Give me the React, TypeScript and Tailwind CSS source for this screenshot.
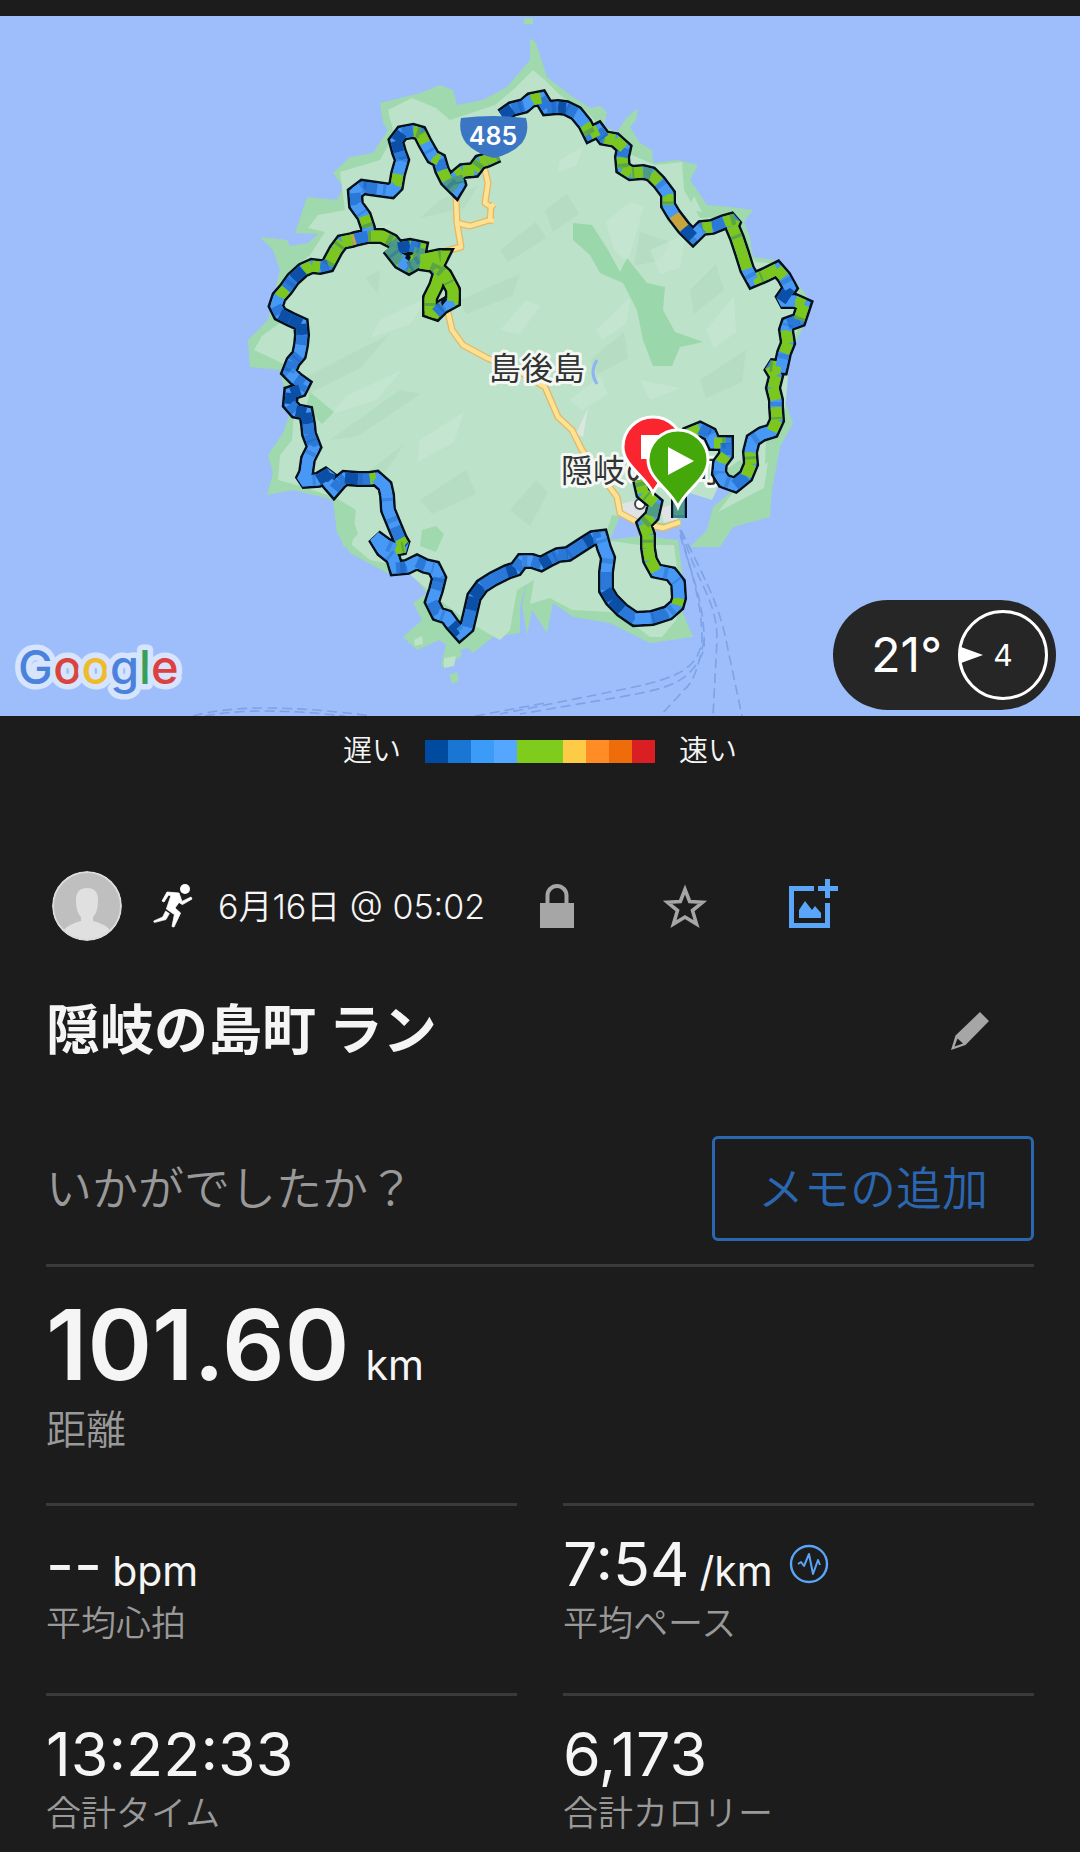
import React from "react";

const speedColors = [
  "bg-[#004a9f]",
  "bg-[#1976d2]",
  "bg-[#3a9bf8]",
  "bg-[#55a6ff]",
  "bg-[#80cc1c]",
  "bg-[#80cc1c]",
  "bg-[#fecb47]",
  "bg-[#ff8c24]",
  "bg-[#ee6c0a]",
  "bg-[#d91f22]",
];

const stats = [
  { value: "--", unit: "bpm", label: "平均心拍" },
  { value: "7:54", unit: "/km", label: "平均ペース", graded: true },
  { value: "13:22:33", label: "合計タイム" },
  { value: "6,173", label: "合計カロリー" },
];

const paceColor: Record<string, string> = {
  d: "#0b4fa6",
  b: "#2a78d8",
  l: "#4799f5",
  g: "#7bc71f",
  t: "#4d9a86",
  o: "#c9a43a",
};

// x, y, pace of the stretch that ends at this point
type Point = [number, number, string];

const tracks: Point[][] = [
  [
    [498, 155, "g"], [487, 160, "g"], [480, 162, "g"], [474, 170, "g"], [463, 171, "g"], [457, 176, "g"],
    [459, 184, "t"], [456, 189, "l"], [447, 180, "t"], [442, 170, "g"], [439, 160, "b"], [433, 157, "g"],
    [425, 143, "l"], [420, 133, "g"], [413, 131, "g"], [402, 133, "b"], [396, 141, "d"], [399, 152, "d"],
    [402, 160, "b"], [398, 174, "l"], [396, 186, "g"], [391, 191, "l"], [377, 189, "l"], [363, 187, "b"],
    [355, 193, "l"], [356, 205, "b"], [364, 216, "l"], [368, 228, "g"], [368, 236, "l"], [355, 239, "b"],
    [352, 240, "o"], [342, 242, "g"], [336, 250, "g"], [328, 265, "g"], [320, 267, "b"], [312, 266, "g"],
    [303, 270, "g"], [293, 279, "d"], [286, 289, "b"], [279, 297, "g"], [276, 306, "l"], [280, 314, "b"],
    [290, 319, "d"], [301, 324, "d"], [302, 335, "d"], [301, 345, "b"], [299, 355, "l"], [293, 362, "b"],
    [289, 372, "b"], [296, 379, "l"], [303, 384, "b"], [300, 390, "b"], [291, 393, "d"], [290, 404, "d"],
    [296, 411, "b"], [306, 413, "d"], [308, 424, "d"], [309, 434, "b"], [314, 447, "b"], [308, 459, "l"],
    [306, 473, "l"], [302, 481, "l"], [318, 480, "l"], [330, 473, "d"], [328, 482, "d"], [334, 489, "l"],
    [340, 482, "b"], [345, 478, "b"], [358, 479, "d"], [370, 479, "b"], [376, 478, "g"], [385, 486, "l"],
    [387, 495, "l"], [388, 510, "l"], [395, 527, "l"], [400, 539, "b"], [404, 546, "g"], [405, 547, "d"],
    [395, 549, "g"], [386, 545, "l"], [375, 537, "l"], [383, 550, "l"], [393, 558, "l"], [396, 568, "l"],
    [407, 567, "b"], [417, 562, "l"], [425, 566, "b"], [434, 568, "l"], [439, 578, "l"], [436, 590, "b"],
    [432, 602, "l"], [438, 614, "b"], [447, 617, "l"], [452, 624, "l"], [460, 633, "d"], [467, 627, "l"],
    [471, 610, "b"], [474, 597, "d"], [482, 586, "d"], [493, 579, "b"], [507, 572, "b"], [516, 569, "d"],
    [522, 561, "b"], [532, 561, "l"], [541, 564, "b"], [550, 559, "d"], [558, 555, "b"], [568, 554, "b"],
    [585, 543, "b"], [593, 538, "d"], [601, 537, "b"], [604, 548, "l"], [608, 558, "l"], [606, 572, "l"],
    [606, 590, "b"], [612, 600, "d"], [622, 610, "d"], [635, 619, "b"], [652, 618, "l"], [668, 613, "b"],
    [677, 605, "l"], [679, 598, "g"], [678, 583, "l"], [671, 574, "l"], [656, 571, "l"], [650, 560, "g"],
    [648, 548, "g"], [648, 535, "g"], [644, 524, "g"], [652, 516, "g"], [655, 503, "t"], [643, 493, "g"],
    [640, 480, "g"],
  ],
  [
    [368, 236, "g"], [382, 236, "g"], [392, 241, "g"], [398, 248, "t"], [410, 246, "d"], [420, 248, "b"],
    [418, 258, "t"], [408, 263, "g"], [398, 258, "l"], [389, 248, "b"], [400, 262, "t"], [409, 267, "l"],
    [421, 260, "t"], [440, 256, "g"], [442, 256, "g"], [436, 268, "g"], [440, 273, "b"], [436, 286, "g"],
    [430, 298, "g"], [430, 311, "g"], [436, 313, "g"], [442, 307, "b"], [453, 301, "l"], [453, 290, "g"],
    [445, 275, "g"], [434, 265, "g"], [420, 263, "g"],
  ],
  [
    [679, 518, "t"], [679, 490, "t"], [678, 450, "g"], [688, 434, "g"], [700, 429, "g"], [710, 434, "b"],
    [714, 443, "l"], [726, 443, "g"], [726, 455, "b"], [720, 463, "g"], [719, 473, "l"], [724, 481, "l"],
    [735, 485, "l"], [746, 476, "b"], [751, 464, "g"], [750, 452, "g"], [753, 440, "l"], [762, 434, "l"],
    [772, 431, "l"], [777, 420, "g"], [776, 407, "g"], [776, 400, "l"], [773, 388, "g"], [776, 376, "g"],
    [770, 366, "g"], [781, 367, "g"], [784, 353, "l"], [788, 343, "g"], [786, 330, "g"], [788, 324, "l"],
    [799, 320, "b"], [804, 305, "g"], [795, 301, "g"], [781, 301, "l"], [790, 288, "d"], [784, 277, "l"],
    [777, 269, "g"], [765, 275, "g"], [753, 280, "g"], [747, 269, "l"], [742, 253, "g"], [737, 238, "g"],
    [732, 226, "g"], [735, 219, "g"], [724, 222, "g"], [712, 227, "b"], [702, 228, "g"], [693, 237, "l"],
    [684, 228, "d"], [674, 215, "o"], [668, 205, "l"], [668, 194, "g"], [659, 182, "l"], [651, 174, "g"],
    [643, 172, "t"], [631, 173, "g"], [623, 168, "g"], [622, 157, "g"], [624, 148, "b"], [615, 140, "g"],
    [604, 138, "g"], [598, 130, "b"], [590, 134, "g"], [585, 124, "g"], [576, 113, "l"], [566, 108, "b"],
    [558, 107, "d"], [547, 108, "b"], [541, 98, "b"], [531, 100, "g"], [524, 106, "l"], [512, 109, "b"],
    [502, 116, "d"],
  ],
];

const shades = [
  "M440 200l38-14-14 22-44 10z",
  "M300 380l90-46-30 34-52 26z",
  "M330 440l70-50 20 4-62 42z",
  "M370 470l34-26-24 36z",
  "M366 278l14-8-2 24z",
  "M420 500l46-30 10 24-44 20z",
  "M460 300l60-26-8 22-46 18z",
  "M500 250l36-28 10 16-38 24z",
  "M640 232l30 10-10 18-26 6z",
  "M690 290l26-26 8 26-30 24z",
  "M700 380l46-30-4 32-36 16z",
  "M590 360l34-28 4 26-30 16z",
  "M510 510l26-30 12 12-18 34z",
  "M545 210l22-16 12 20-26 18z",
];

const lights = [
  "M380 320l50-24-20 28-40 14z",
  "M346 396l56-26-26 30-44 14z",
  "M420 440l44-28-10 30-36 20z",
  "M560 160l24-14-8 20-18 6z",
  "M606 222l24-20 14 4-16 56-14-12z",
  "M650 250l36-16-6 34-20 6z",
  "M596 330l34-32-4 26-24 16z",
  "M706 330l28-34 2 36-22 16z",
  "M570 400l30-24 8 18-26 16z",
  "M640 380l40 8-30 12z",
  "M500 330l26-30 14 6-20 28z",
  "M350 240l44-18-10 10-26 14z",
];

const roads = [
  "M456 196 457 223 461 247 446 251",
  "M457 223 470 226 490 220 491 207 485 203 488 183 484 166",
  "M491 207 494 204M490 220 494 221",
  "M448 312 452 330 463 345 487 358 520 372 545 387 558 417 572 430 582 450 617 497 620 513 637 522 663 528 680 522",
];

const ferryLines = [
  "M680 530C690 570 702 600 702 640 698 668 680 677 630 688L500 714",
  "M680 535C694 580 706 610 704 650 690 683 670 688 620 697L520 714",
  "M681 530C700 590 717 600 717 640L713 716",
  "M681 530C700 570 718 600 726 640L742 716",
  "M704 640C698 670 692 684 684 690L660 716",
  "M193 716Q250 700 372 716",
  "M205 716Q255 706 345 716",
  "M475 716 545 703",
];

const coast =
  "M530 38 536 43 547 77 570 95 590 108 600 106 607 112 604 126 617 132 627 117 638 108 636 120 630 127 640 143 652 150 653 163 677 160 698 165 690 180 707 205 730 207 753 210 744 222 750 237 753 257 775 260 782 266 797 283 812 303 807 320 797 340 787 370 783 397 793 423 780 447 772 490 770 517 733 527 720 547 690 547 707 530 713 507 733 490 720 480 687 490 680 527 653 527 620 516 610 540 640 536 678 540 682 570 683 613 693 637 650 643 610 623 573 617 553 603 547 633 532 610 527 635 522 606 527 580 520 607 520 633 493 637 473 653 468 648 460 650 462 656 452 662 448 668 441 666 446 645 440 640 417 650 403 637 422 620 413 603 427 593 410 573 387 573 350 553 337 533 333 500 293 490 267 495 273 473 268 455 283 433 290 413 280 370 250 367 248 340 268 320 280 270 273 250 260 237 287 240 290 246 308 243 318 234 295 233 307 197 337 200 343 187 333 173 350 157 373 153 388 130 383 123 380 103 420 93 440 85 453 90 457 105 483 100 507 87 530 60Z";

const inland =
  "M533 70 545 80 560 95 590 115 604 132 625 152 655 165 682 162 684 190 700 218 735 216 744 250 756 262 778 264 794 284 806 306 790 350 786 400 780 430 766 440 764 486 740 460 726 470 712 500 680 490 672 524 640 520 612 515 604 540 640 545 674 545 680 590 682 600 676 620 662 637 650 637 630 622 610 612 572 610 550 598 530 604 534 580 517 590 510 630 500 640 468 622 440 600 400 566 370 560 352 545 356 510 336 498 300 486 278 480 280 455 292 440 294 410 288 366 254 350 262 336 284 320 285 275 310 255 325 232 308 228 318 215 345 210 340 172 380 160 394 135 388 110 412 98 436 108 450 120 495 105 515 88Z";

function ActivityMap() {
  return (
    <svg viewBox="0 16 1080 700" className="block h-auto w-full bg-[#9dbefa]" role="img" aria-label="Map">
      <path d={coast} fill="#9fd9ad" />
      <path d="M524 18h9v6h-9zM449 675l8-3 2 9-7 3z" fill="#9fd9ad" />
      <path d={inland} fill="#bce2c9" />
      <path d="M414 640l8-4 1 8-8 2zM444 658l12-2-2 10-10 2z" fill="#bce2c9" />
      <path d="M735 490 768 462 764 488 718 512zM694 196l8 16-14-2z" fill="#bce2c9" />
      {shades.map((d) => <path key={d} d={d} fill="#a4cfb2" opacity=".28" />)}
      {lights.map((d) => <path key={d} d={d} fill="#cfecd9" opacity=".45" />)}
      <path
        d="M573 223 592 225 608 250 620 272 627 258 647 283 665 287 663 310 675 332 703 342 680 347 672 366 653 366 643 340 637 310 623 283 600 273 590 255 573 240Z"
        fill="#9ad7ab"
      />
      <path d="M310 392 334 412 322 424 306 408zM340 512l12 4 6 18-14 14-8-22zM422 530l14-4 8 8-8 18-16-6z" fill="#9fd9ad" />
      <path d="M588 408 576 434 583 437z" fill="#dce6e0" />
      <path d="M597 360q-8 12 0 24" fill="none" stroke="#8db5f3" strokeWidth="3" />
      <path d="M618 505l22-6 10 14-8 8-18-4zM660 508l16-4 2 16-14 2z" fill="#dfe3e6" />

      {ferryLines.map((d) => (
        <path key={d} d={d} fill="none" stroke="#7fa2e6" strokeWidth="1.6" strokeDasharray="10 5" />
      ))}

      <g fill="none" strokeLinejoin="round">
        {roads.map((d) => <path key={d} d={d} stroke="#e3b866" strokeWidth="7" />)}
        {roads.map((d) => <path key={d} d={d} stroke="#fde293" strokeWidth="4.4" />)}
      </g>

      <g
        fontFamily="'Noto Sans CJK JP', sans-serif"
        fontSize="32"
        fill="#333"
        stroke="#f4f8f4"
        strokeWidth="6"
        strokeLinejoin="round"
        paintOrder="stroke"
      >
        <text x="489" y="380">島後島</text>
        <text x="561" y="482">隠岐の島町</text>
      </g>
      <circle cx="640" cy="504" r="5" fill="#fff" stroke="#444" strokeWidth="2" />

      <g fill="none" strokeLinejoin="miter" strokeMiterlimit="2">
        {tracks.map((track, i) => (
          <polyline key={i} points={track.map((p) => `${p[0]},${p[1]}`).join(" ")} stroke="#04101c" strokeWidth="16" />
        ))}
        {tracks.map((track, i) => (
          <polyline
            key={i}
            points={track.map((p) => `${p[0]},${p[1]}`).join(" ")}
            stroke={i === 1 ? "#7bc71f" : "#4799f5"}
            strokeWidth="11"
          />
        ))}
        {tracks.map((track) =>
          track.slice(1).map((p, i) => (
            <path
              key={`${p[0]}-${p[1]}-${i}`}
              d={`M${track[i][0]} ${track[i][1]}L${p[0]} ${p[1]}`}
              stroke={paceColor[p[2]]}
              strokeWidth="11"
            />
          ))
        )}
        {/* uneven bands so the pace does not look flat along a stretch */}
        {tracks.map((track, i) => (
          <polyline
            key={i}
            points={track.map((p) => `${p[0]},${p[1]}`).join(" ")}
            stroke="#0d4fae"
            strokeOpacity=".28"
            strokeWidth="11"
            strokeDasharray="3 17 5 29 2 11 4 38"
          />
        ))}
      </g>
      <path d="M407 254l4 3-2 4-4-3zM441 302l5-8 1 6-5 6z" fill="#04101c" />

      <path d="M461 118Q494 114 526 118 530 132 522 143 512 154 494 158 476 154 466 143 458 132 461 118Z" fill="#3b76c4" />
      <text x="493" y="145" textAnchor="middle" fontFamily="Inter, sans-serif" fontSize="25" fontWeight="600" fill="#fff">
        485
      </text>

      <path d="M653 493C646 476 623 466 623 447a30 30 0 0 1 60 0C683 466 660 476 653 493Z" fill="#fb2530" stroke="#fff" strokeWidth="3" />
      <path d="M641 435h25v24h-25z" fill="#fff" />
      <path d="M678 507C671 490 648 479 648 460a30 30 0 0 1 60 0C708 479 685 490 678 507Z" fill="#45a80a" stroke="#fff" strokeWidth="3" />
      <path d="M668 447 694 461 668 475Z" fill="#fff" />

      <text
        x="18"
        y="684"
        fontFamily="Inter, sans-serif"
        fontSize="47"
        fontWeight="500"
        stroke="#d6e5fd"
        strokeWidth="11"
        strokeLinejoin="round"
        paintOrder="stroke"
      >
        <tspan fill="#4a82dc">G</tspan>
        <tspan fill="#d9453d">o</tspan>
        <tspan fill="#eebb2c">o</tspan>
        <tspan fill="#4a82dc">g</tspan>
        <tspan fill="#38a055">l</tspan>
        <tspan fill="#dc4040">e</tspan>
      </text>
    </svg>
  );
}

function Weather() {
  return (
    <div className="absolute right-6 bottom-1.5 flex items-center gap-4 rounded-full bg-[#262626] py-2.5 pr-2 pl-[38px] text-white">
      <span className="text-5xl">21°</span>
      <div className="relative flex size-[90px] items-center justify-center rounded-full border-3 border-white">
        <svg viewBox="0 0 22 16" className="absolute left-0 w-[22px]" fill="#fff">
          <path d="M0 0 22 8 0 16Z" />
        </svg>
        <span className="text-3xl">4</span>
      </div>
    </div>
  );
}

function Avatar() {
  return (
    <svg viewBox="0 0 70 70" className="size-[70px] rounded-full" role="img" aria-label="Profile">
      <circle cx="35" cy="35" r="34" fill="#bfbfbf" stroke="#dcdcdc" strokeWidth="2" />
      <path d="M24 29Q24 17 35 17T46 29C46 38 44 43 41 46V50C48 52 54 54 58 59A34 34 0 0 1 12 59C16 54 22 52 29 50V46C26 43 24 38 24 29Z" fill="#e0e0e0" />
    </svg>
  );
}

function RunIcon() {
  return (
    <svg viewBox="0 0 42 46" className="h-[46px] w-[42px]" fill="none" stroke="#fff" strokeLinejoin="round">
      <circle cx="33" cy="6" r="5" fill="#fff" stroke="none" />
      <path d="M15 9 27 10 30 18.400 39 14 40 16 30.400 21.600 27 19.400 23 25 28.600 30 22 44 20 43.500 22.400 31.600 14.400 26 19 12.400 16.400 12.200 12 19 10 18Z" fill="#fff" strokeWidth=".8" />
      <path d="M13.600 28 17.400 30.600 14 36.600 2.400 39.600 1.600 38 10.600 34Z" fill="#fff" strokeWidth=".6" />
    </svg>
  );
}

function IconButton({ label, children }: { label: string; children: React.ReactNode }) {
  return (
    <button type="button" aria-label={label} className="flex size-12 items-center justify-center">
      {children}
    </button>
  );
}

export default function App() {
  return (
    <main className="min-h-screen bg-[#1c1c1c] pt-4 font-['Inter','Noto_Sans_CJK_JP',sans-serif] text-[#f5f5f5]">
      <div className="relative">
        <ActivityMap />
        <Weather />
      </div>

      <div className="flex items-center justify-center gap-6 pt-5 text-[29px] leading-[30px] font-[350]">
        <span>遅い</span>
        <div className="flex">
          {speedColors.map((color, i) => (
            <span key={i} className={`h-[23px] w-[23px] ${color}`} />
          ))}
        </div>
        <span>速い</span>
      </div>

      <div className="px-[46px]">
        <div className="mt-[105px] flex items-center pl-1.5">
          <Avatar />
          <div className="ml-[30px] flex items-center gap-6">
            <RunIcon />
            <span className="text-[34px] font-[350]">6月16日 @ 05:02</span>
          </div>
          <div className="ml-12 flex gap-20">
            <IconButton label="Privacy">
              <svg viewBox="0 0 34 44" className="h-11" fill="#a6a6a6">
                <path d="M0 19h5.500v-7.500a11.500 11.500 0 0 1 23 0v7.500h5.500v25h-34zM9.500 19h15v-7.500a7.500 7.500 0 0 0-15 0z" />
              </svg>
            </IconButton>
            <IconButton label="Favorite">
              <svg viewBox="0 0 48 46" className="h-[46px]" fill="none" stroke="#a6a6a6" strokeWidth="3.600">
                <path d="M24 6.500 28.700 18.500 41.500 19.300 31.500 27.500 35.500 41 24 34 12.500 41 16.500 27.500 6.500 19.300 19.300 18.500Z" />
              </svg>
            </IconButton>
            <IconButton label="Add photo">
              <svg viewBox="0 0 49 54" className="h-[54px] w-[49px] shrink-0" fill="#5aa5f8">
                <path d="M0 7h25v5H5v32h31V24h5v25H0zM36 0h5v7h8v5h-8v7h-5v-7h-7v-5h7zM10 31l6-9 7 9 3-4 6 7v5H10z" />
              </svg>
            </IconButton>
          </div>
        </div>

        <div className="mt-[54px] flex items-center justify-between pr-10">
          <h1 className="text-[54px] leading-[72px] font-bold">隠岐の島町 ラン</h1>
          <IconButton label="Edit title">
            <svg viewBox="0 0 38 38" className="size-[38px]" fill="#a6a6a6">
              <path d="M29 0 38 9 14.500 33 0 38 4.500 23.500ZM6.500 26.500 3.500 34.500 12 31.500Z" fillRule="evenodd" />
            </svg>
          </IconButton>
        </div>

        <div className="mt-[69px] flex items-center justify-between border-b-3 border-[#3a3a3a] pb-[23px] text-[46px] font-[350]">
          <p className="text-[#999]">いかがでしたか？</p>
          <button type="button" className="rounded-md border-3 border-[#2b66b0] px-[43px] leading-[99px] text-[#2b66b0]">
            メモの追加
          </button>
        </div>

        <div className="pt-[30px]">
          <p className="flex items-baseline gap-4 leading-none">
            <span className="text-[98px] leading-24 font-semibold">101.60</span>
            <span className="text-[41px] leading-none">km</span>
          </p>
          <p className="mt-[13px] text-[40px] leading-12 font-[350] text-[#999]">距離</p>
        </div>

        <div className="mt-[49px] grid grid-cols-2 gap-x-[46px]">
          {stats.map((s) => (
            <div key={s.label} className="border-t-3 border-[#3a3a3a] pt-[27px] pb-[50px] last:pb-4">
              <div className="flex items-center gap-4">
                <p className="flex items-baseline gap-2.5">
                  <span className="text-[61px] leading-[62px]">{s.value}</span>
                  {s.unit && <span className="text-[41px] leading-none">{s.unit}</span>}
                </p>
                {s.graded && (
                  <svg viewBox="0 0 40 40" className="size-10" fill="none" stroke="#5aa5f8" strokeWidth="2.400">
                    <circle cx="20" cy="20" r="18" />
                    <path d="M9 20l3-2 3 4 5-12 4 20 5-14 2 5" strokeWidth="2" strokeLinejoin="round" />
                  </svg>
                )}
              </div>
              <p className="mt-2 text-[35px] leading-10 font-[350] text-[#999]">{s.label}</p>
            </div>
          ))}
        </div>
      </div>
    </main>
  );
}
